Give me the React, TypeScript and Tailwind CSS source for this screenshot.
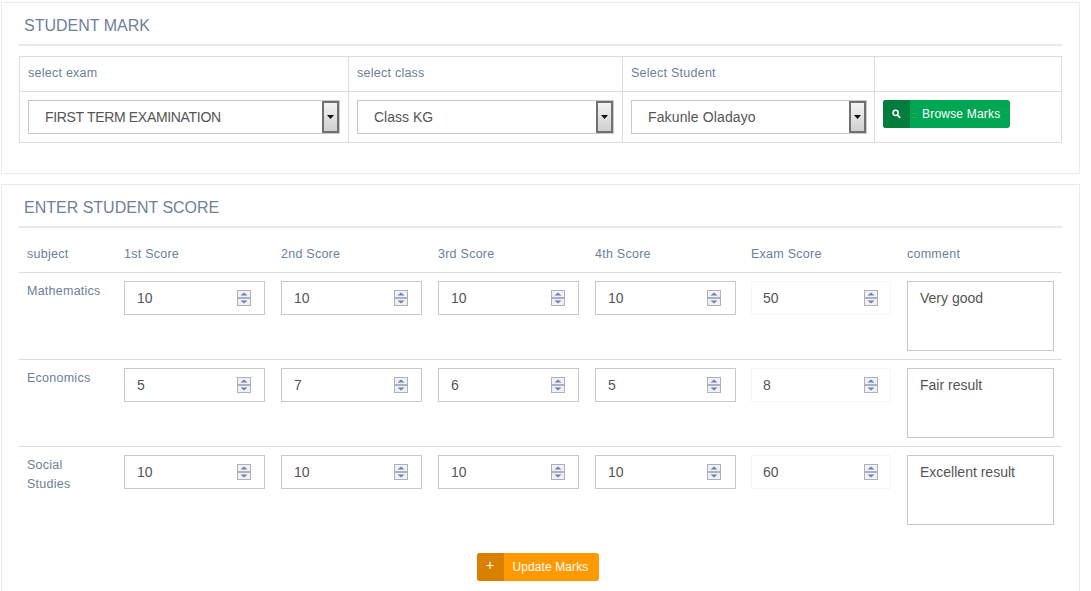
import React from "react";

const fakeSelects = [
  { label: "select exam", value: "FIRST TERM EXAMINATION", width: "w-[312px]", track: "tracking-[-0.32px]" },
  { label: "select class", value: "Class KG", width: "w-[257px]", track: "tracking-normal" },
  { label: "Select Student", value: "Fakunle Oladayo", width: "w-[236px]", track: "tracking-[0.13px]" },
];

const rows = [
  { subject: "Mathematics", scores: ["10", "10", "10", "10"], exam: "50", comment: "Very good" },
  { subject: "Economics", scores: ["5", "7", "6", "5"], exam: "8", comment: "Fair result" },
  { subject: "Social Studies", scores: ["10", "10", "10", "10"], exam: "60", comment: "Excellent result" },
];

const heads = ["subject", "1st Score", "2nd Score", "3rd Score", "4th Score", "Exam Score", "comment"];

const Spinner = () => (
  <svg width="14" height="16" viewBox="0 0 14 16" className="shrink-0">
    <rect x="0.5" y="0.5" width="13" height="7" fill="#f0f1f5" stroke="#aeb1b8" />
    <rect x="0.5" y="8.5" width="13" height="7" fill="#f0f1f5" stroke="#aeb1b8" />
    <path d="M7 2.5 L10.5 5.5 H3.5 Z" fill="#6a7fc0" />
    <path d="M3.5 10.5 H10.5 L7 13.5 Z" fill="#6a7fc0" />
  </svg>
);

const ScoreInput = ({ value, exam, tight }: { value: string; exam?: boolean; tight?: boolean }) => (
  <div
    className={`flex h-[34px] items-center justify-between border text-sm text-[#555] ${
      exam
        ? "w-[140px] border-[#f6f6f6] pl-[11px] pr-3"
        : tight
          ? "w-[141px] border-[#c8c8c8] pl-3 pr-3.5"
          : "w-[141px] border-[#c8c8c8] pl-3 pr-[13px]"
    }`}
  >
    <span>{value}</span>
    <Spinner />
  </div>
);

const FakeSelect = ({ value, width, track }: { value: string; width: string; track: string }) => (
  <div className={`flex h-[34px] items-center justify-between border border-[#c8c8c8] pl-4 text-sm text-[#555] ${width}`}>
    <span className={track}>{value}</span>
    <div className="flex h-[32px] w-[17px] items-center justify-center border-2 border-[#707070] bg-gradient-to-b from-[#f4f4f4] to-[#cfcfcf]">
      <svg width="7" height="4" viewBox="0 0 7 4">
        <path d="M0 0 H7 L3.5 4 Z" fill="#111" />
      </svg>
    </div>
  </div>
);

export default function App() {
  return (
    <div className="h-[591px] w-[1091px] overflow-hidden bg-white pl-px pt-0.5 font-['Liberation_Sans',Arial,sans-serif] text-[#6b7f99]">
      <section className="h-[172px] w-[1079px] border border-[#e8eaee] px-[17px]">
        <h2 className="pl-[5px] pt-[13px] text-base leading-[20px] text-[#6f8199]">STUDENT MARK</h2>
        <div className="mt-[8px] h-0.5 w-[1043px] bg-[#e6e9ed]" />
        <table className="mt-2.5 w-[1042px] table-fixed border-collapse border border-[#dddddd] text-[12.5px] tracking-[0.25px]">
          <colgroup>
            <col className="w-[329px]" />
            <col className="w-[274px]" />
            <col className="w-[252px]" />
            <col className="w-[187px]" />
          </colgroup>
          <tbody>
            <tr className="h-[35px]">
              {fakeSelects.map((s) => (
                <td key={s.label} className="border border-[#dddddd] px-2 pb-px font-normal">
                  {s.label}
                </td>
              ))}
              <td className="border border-[#dddddd]" />
            </tr>
            <tr className="h-[51px]">
              {fakeSelects.map((s) => (
                <td key={s.label} className="border border-[#dddddd] px-2 tracking-normal">
                  <FakeSelect value={s.value} width={s.width} track={s.track} />
                </td>
              ))}
              <td className="border border-[#dddddd] px-2 tracking-normal">
                <button type="button" className="-mt-1.5 flex h-7 w-[127px] overflow-hidden rounded-[3px] bg-[#00a652] text-xs text-white">
                  <span className="flex h-full w-[27px] items-center justify-center bg-[#037d3d]">
                    <svg width="9" height="10" viewBox="0 0 9 10" fill="none" stroke="currentColor">
                      <circle cx="3.6" cy="3.8" r="2.6" strokeWidth="1.5" />
                      <path d="M5.5 6 L8.2 9" strokeWidth="1.8" />
                    </svg>
                  </span>
                  <span className="flex h-full items-center pl-3 tracking-[0.2px]">Browse Marks</span>
                </button>
              </td>
            </tr>
          </tbody>
        </table>
      </section>

      <section className="mt-2.5 h-[420px] w-[1079px] border border-b-0 border-[#e8eaee] px-[17px]">
        <h2 className="pl-[5px] pt-[13px] text-base leading-[20px] text-[#6f8199]">ENTER STUDENT SCORE</h2>
        <div className="mt-2 h-0.5 w-[1043px] bg-[#e6e9ed]" />
        <table className="mt-[9px] w-[1043px] table-fixed border-collapse text-[12.5px] tracking-[0.25px]">
          <colgroup>
            <col className="w-[97px]" />
            <col className="w-[157px]" />
            <col className="w-[157px]" />
            <col className="w-[157px]" />
            <col className="w-[156px]" />
            <col className="w-[156px]" />
            <col className="w-[163px]" />
          </colgroup>
          <thead>
            <tr className="h-[35px] border-b border-[#dddddd]">
              {heads.map((h) => (
                <th key={h} className="px-2 text-left font-normal">
                  {h}
                </th>
              ))}
            </tr>
          </thead>
          <tbody>
            {rows.map((row, i) => (
              <tr key={row.subject} className={i < 2 ? "border-b border-[#dddddd]" : ""}>
                <td className="px-2 pb-2 pt-[9px] align-top leading-[19px]">{row.subject}</td>
                {row.scores.map((score, j) => (
                  <td key={j} className="p-2 align-top tracking-normal">
                    <ScoreInput value={score} tight={j === 3} />
                  </td>
                ))}
                <td className="p-2 align-top tracking-normal">
                  <ScoreInput value={row.exam} exam />
                </td>
                <td className="p-2 align-top tracking-normal">
                  <div className="h-[70px] w-[147px] border border-[#c8c8c8] px-3 py-2 text-sm leading-[17px] text-[#555]">
                    {row.comment}
                  </div>
                </td>
              </tr>
            ))}
          </tbody>
        </table>
        <div className="mt-5 flex justify-center pr-[6px]">
          <button type="button" className="flex h-7 w-[122px] overflow-hidden rounded-[3px] bg-[#ff9900] text-xs text-white">
            <span className="flex h-full w-[27px] items-center justify-center bg-[#d98000] pb-1 text-sm">+</span>
            <span className="flex h-full items-center pl-[9px] tracking-[0.1px]">Update Marks</span>
          </button>
        </div>
      </section>
    </div>
  );
}
